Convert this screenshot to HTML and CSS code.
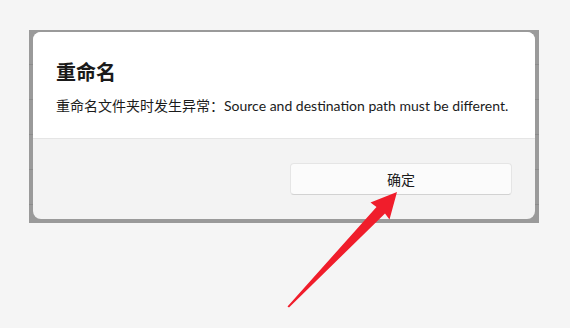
FILE: index.html
```html
<!DOCTYPE html>
<html lang="zh-CN">
<head>
    <meta charset="UTF-8">
    <meta name="viewport" content="width=device-width, initial-scale=1.0">
    <title>重命名</title>
    <link rel="stylesheet" href="styles.css">
</head>
<body>
    <div class="backdrop">
        <div class="dialog">
            <div class="dialog-body">
                <div class="dialog-title">重命名</div>
                <div class="dialog-text">重命名文件夹时发生异常：Source and destination path must be different.</div>
            </div>
            <div class="dialog-footer">
                <button class="btn">确定</button>
            </div>
        </div>
    </div>

    <!-- 指向按钮的红色箭头 -->
    <svg class="arrow" width="570" height="328" viewBox="0 0 570 328">
        <polygon points="287.5,306.5 376.5,207 370.5,202.5 397,192 389.5,219.5 385,213.5 289,307.5" fill="#f01d2b"/>
    </svg>
</body>
</html>
```

FILE: styles.css
```css
body {
    font-family: "Segoe UI", Lato, "Noto Sans CJK SC", sans-serif;
    margin: 0;
    background-color: #f5f5f5;
    color: #1b1b1b;
    width: 570px;
    height: 328px;
    overflow: hidden;
}
.backdrop {
    margin: 30px 0 0 29px;
    width: 502px;
    padding: 2px 4px 4px 4px;
    background-color: #9a9a9a;
    background-image: repeating-linear-gradient(to bottom, transparent 0, transparent 34px, #8c8c8c 34px, #8c8c8c 35px);
}
.dialog {
    background-color: #f3f3f3;
    border-radius: 8px;
    overflow: hidden;
}
.dialog-body {
    background-color: #fff;
    padding: 26px 24px 22px 23px;
    border-bottom: 1px solid #e5e5e5;
}
.dialog-title {
    font-size: 20px;
    line-height: 28px;
    font-weight: bold;
    color: #1a1a1a;
    margin-bottom: 10px;
}
.dialog-text {
    font-size: 14px;
    line-height: 20px;
    white-space: nowrap;
}
.dialog-footer {
    display: flex;
    justify-content: flex-end;
    padding: 24px 23px 24px 24px;
}
.btn {
    width: 222px;
    height: 32px;
    font-family: inherit;
    font-size: 14px;
    color: #1b1b1b;
    background-color: #fbfbfb;
    border: 1px solid #e5e5e5;
    border-bottom-color: #d2d2d2;
    border-radius: 4px;
    padding: 0;
}
.arrow {
    position: absolute;
    left: 0;
    top: 0;
}
```
